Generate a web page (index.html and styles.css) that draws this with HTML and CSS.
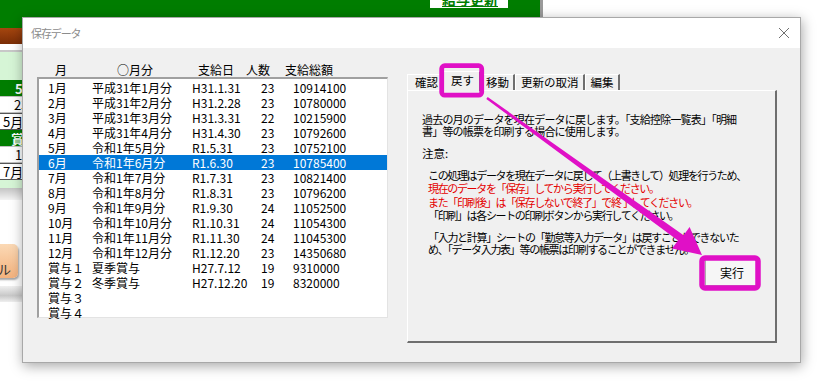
FILE: index.html
```html
<!DOCTYPE html>
<html lang="ja">
<head>
<meta charset="utf-8">
<title>保存データ</title>
<link rel="stylesheet" href="styles.css">
</head>
<body>
<div class="sheet">
  <div class="top-band"><div class="link-box"><span>給与更新</span></div></div>
  <div class="brown-band"></div>
  <div class="white-gap"></div>
  <div class="light-green big"></div>
  <div class="cell dark pad15">5</div>
  <div class="cell white pad14">23</div>
  <div class="cell white pad3 bt">5月</div>
  <div class="cell dark pad11">賞与</div>
  <div class="cell white pad15">19</div>
  <div class="cell white pad3 bt">7月</div>
  <div class="light-green thin"></div>
  <div class="shade"></div>
  <div class="white-area"></div>
  <div class="peach-btn"><span>ル</span></div>
  <div class="shade2"></div>
</div>

<div class="dialog">
  <div class="titlebar">
    <span class="title">保存データ</span>
    <svg class="close" width="12" height="12" viewBox="0 0 12 12"><path d="M1 1 L11 11 M11 1 L1 11" stroke="#707070" stroke-width="1" fill="none"/></svg>
  </div>
  <div class="body">
    <div class="left">
      <div class="head">
        <span>月</span><span>○月分</span><span>支給日</span><span>人数</span><span>支給総額</span>
      </div>
      <div class="list">
        <div class="row"><span>1月</span><span>平成31年1月分</span><span>H31.1.31</span><span>23</span><span>10914100</span></div>
        <div class="row"><span>2月</span><span>平成31年2月分</span><span>H31.2.28</span><span>23</span><span>10780000</span></div>
        <div class="row"><span>3月</span><span>平成31年3月分</span><span>H31.3.31</span><span>22</span><span>10215900</span></div>
        <div class="row"><span>4月</span><span>平成31年4月分</span><span>H31.4.30</span><span>23</span><span>10792600</span></div>
        <div class="row"><span>5月</span><span>令和1年5月分</span><span>R1.5.31</span><span>23</span><span>10752100</span></div>
        <div class="row sel"><span>6月</span><span>令和1年6月分</span><span>R1.6.30</span><span>23</span><span>10785400</span></div>
        <div class="row"><span>7月</span><span>令和1年7月分</span><span>R1.7.31</span><span>23</span><span>10821400</span></div>
        <div class="row"><span>8月</span><span>令和1年8月分</span><span>R1.8.31</span><span>23</span><span>10796200</span></div>
        <div class="row"><span>9月</span><span>令和1年9月分</span><span>R1.9.30</span><span>24</span><span>11052500</span></div>
        <div class="row"><span>10月</span><span>令和1年10月分</span><span>R1.10.31</span><span>24</span><span>11054300</span></div>
        <div class="row"><span>11月</span><span>令和1年11月分</span><span>R1.11.30</span><span>24</span><span>11045300</span></div>
        <div class="row"><span>12月</span><span>令和1年12月分</span><span>R1.12.20</span><span>23</span><span>14350680</span></div>
        <div class="row"><span>賞与１</span><span>夏季賞与</span><span>H27.7.12</span><span>19</span><span>9310000</span></div>
        <div class="row"><span>賞与２</span><span>冬季賞与</span><span>H27.12.20</span><span>19</span><span>8320000</span></div>
        <div class="row"><span>賞与３</span><span></span><span></span><span></span><span></span></div>
        <div class="row"><span>賞与４</span><span></span><span></span><span></span><span></span></div>
      </div>
    </div>
    <div class="right">
      <div class="tabs">
        <div class="tab first">確認</div>
        <div class="tab active">戻す</div>
        <div class="tab">移動</div>
        <div class="tab">更新の取消</div>
        <div class="tab">編集</div>
      </div>
      <div class="panel">
        <div class="p1">
          <div>過去の月のデータを現在データに戻します。「支給控除一覧表」「明細</div>
          <div>書」等の帳票を印刷する場合に使用します。</div>
        </div>
        <div class="note">注意:</div>
        <div class="block">
          <div>この処理はデータを現在データに戻して（上書きして）処理を行うため、</div>
          <div class="red">現在のデータを「保存」してから実行してください。</div>
          <div class="red">また「印刷後」は「保存しないで終了」で終了してください。</div>
          <div>「印刷」は各シートの印刷ボタンから実行してください。</div>
        </div>
        <div class="p2">
          <div>「入力と計算」シートの「勤怠等入力データ」は戻すことができないた</div>
          <div>め、「データ入力表」等の帳票は印刷することができません。</div>
        </div>
        <div class="actions"><button class="run">実行</button></div>
      </div>
    </div>
  </div>
</div>

<svg class="annot" width="824" height="385" viewBox="0 0 824 385">
  <rect x="441.7" y="65.7" width="40" height="29.5" rx="3" fill="none" stroke="#e010c6" stroke-width="4.8"/>
  <rect x="702" y="258" width="56" height="30" rx="3" fill="none" stroke="#e010c6" stroke-width="5.5"/>
  <polygon points="487.7,97.1 683.6,235.2 689.6,227.1 702,255 672,248.6 678.0,240.5 486.3,98.9" fill="#e010c6"/>
</svg>
</body>
</html>
```

FILE: styles.css
```css
* { box-sizing: border-box; }

html, body {
  margin: 0;
  padding: 0;
}

body {
  width: 824px;
  height: 385px;
  overflow: hidden;
  position: relative;
  background: #ffffff;
  font-family: "Noto Sans CJK JP", "Noto Sans", sans-serif;
  font-size: 12px;
  color: #000;
}

/* ---------- background spreadsheet ---------- */
.sheet {
  width: 545px;
}

.top-band {
  height: 28px;
  width: 543px;
  background: #007d00;
  border-right: 3px solid #9a9a9a;
  padding-left: 430px;
}

.link-box {
  width: 78px;
  height: 8px;
  background: #fff;
  overflow: hidden;
}

.link-box span {
  display: block;
  margin-top: -9px;
  padding-left: 12px;
  font-size: 14px;
  line-height: 16px;
  font-weight: bold;
  color: #007d00;
  text-decoration: underline;
}

.brown-band {
  height: 16px;
  background: linear-gradient(#a5460f, #7a2d06);
}

.white-gap {
  height: 8px;
  background: #fff;
  border-bottom: 2px solid #c8c8c8;
}

.light-green { background: #d6f5d6; }
.light-green.big { height: 28px; }
.light-green.thin { height: 8px; }

.cell {
  height: 16px;
  line-height: 16px;
  font-size: 13px;
  white-space: nowrap;
  border-bottom: 1px solid #c0c0c0;
}
.cell.dark {
  background: #007d00;
  color: #fff;
  font-weight: bold;
  height: 17px;
  line-height: 17px;
}
.cell.white { background: #fff; }
.cell.bt { border-top: 1px solid #555; border-bottom: 1px solid #555; height: 17px; }
.pad15 { padding-left: 15px; }
.pad14 { padding-left: 14px; }
.pad11 { padding-left: 11px; }
.pad3 { padding-left: 3px; }

.shade {
  height: 12px;
  background: linear-gradient(#c4c4c4, #f4f4f4);
}

.white-area { height: 44px; }

.peach-btn {
  width: 60px;
  height: 34px;
  margin-left: -42px;
  border-radius: 5px;
  background: linear-gradient(#fbd9b5, #f3b27e);
  box-shadow: 1px 2px 2px rgba(0,0,0,0.35);
  position: relative;
}
.peach-btn span {
  position: absolute;
  left: 40px;
  top: 15px;
  font-size: 13px;
  color: #333;
}

.shade2 {
  margin-top: 8px;
  height: 16px;
  background: linear-gradient(#f0f0f0, #c8c8c8 60%, #efefef);
}

/* ---------- dialog ---------- */
.dialog {
  position: absolute;
  left: 22px;
  top: 17px;
  width: 779px;
  height: 346px;
  border: 1px solid #a8a8a8;
  background: #f0f0f0;
  box-shadow: 1px 3px 12px rgba(0,0,0,0.35);
  display: flex;
  flex-direction: column;
}

.titlebar {
  height: 30px;
  background: #fff;
  display: flex;
  align-items: center;
  justify-content: space-between;
  padding: 0 10px 0 8px;
}

.title {
  color: #8c8c8c;
  font-size: 11px;
  letter-spacing: -1.1px;
}

.close { display: block; }

.body {
  flex: 1;
  display: flex;
  padding: 14px 0 0 14px;
}

.left { width: 351px; }

.head {
  height: 15px;
  display: grid;
  grid-template-columns: 62px 81px 48px 39px auto;
  padding-left: 18px;
  line-height: 15px;
  white-space: nowrap;
}

.list {
  height: 241px;
  background: #fff;
  border-top: 2px solid #a0a0a0;
  border-left: 2px solid #a0a0a0;
  border-right: 1px solid #e3e3e3;
  border-bottom: 1px solid #e3e3e3;
  padding-top: 1px;
}

.row {
  height: 15px;
  line-height: 15px;
  display: grid;
  grid-template-columns: 44px 100px 69px 32px 1fr;
  padding-left: 9px;
  white-space: nowrap;
}
.row.sel {
  background: #0078d7;
  color: #fff;
}

.right {
  width: 370px;
  margin-left: 19px;
  padding-top: 9px;
}

.tabs {
  display: flex;
  align-items: flex-end;
  height: 19px;
  position: relative;
  z-index: 1;
}

.tab {
  height: 16px;
  line-height: 14px;
  padding: 0 4px 0 5px;
  background: #f0f0f0;
  border-top: 1px solid #fff;
  border-left: 1px solid #fff;
  border-right: 2px solid #6e6e6e;
  white-space: nowrap;
  font-size: 11.5px;
}
.tab.first { padding-left: 7px; padding-right: 6px; border-right: none; }
.tab.active {
  height: 20px;
  line-height: 17px;
  padding: 0 5px 0 7px;
  margin: 0 -1px -1px -1px;
  border-right: 2px solid #6e6e6e;
}

.panel {
  height: 253px;
  border-top: 1px solid #fff;
  border-left: 1px solid #fff;
  border-right: 2px solid #6e6e6e;
  border-bottom: 2px solid #6e6e6e;
  padding: 22px 12px 0 14px;
  font-size: 11px;
  white-space: nowrap;
}

.p1 {
  line-height: 12px;
  letter-spacing: -0.8px;
}

.note {
  margin-top: 10px;
  line-height: 13px;
  font-size: 11.5px;
}

.block {
  margin-top: 9px;
  padding-left: 6px;
  line-height: 13.3px;
  letter-spacing: -1.35px;
}

.red { color: #e40000; }

.p2 {
  margin-top: 9px;
  padding-left: 6px;
  line-height: 12px;
  letter-spacing: -1.3px;
}

.actions {
  display: flex;
  justify-content: flex-end;
  margin-top: 3px;
  padding-right: 4px;
}

.run {
  width: 54px;
  height: 28px;
  font-family: inherit;
  font-size: 12px;
  background: #f6f6f6;
  border: 1px solid #adadad;
  padding: 0;
  color: #000;
}

/* ---------- annotations overlay ---------- */
.annot {
  position: absolute;
  left: 0;
  top: 0;
  pointer-events: none;
  z-index: 10;
}
```
